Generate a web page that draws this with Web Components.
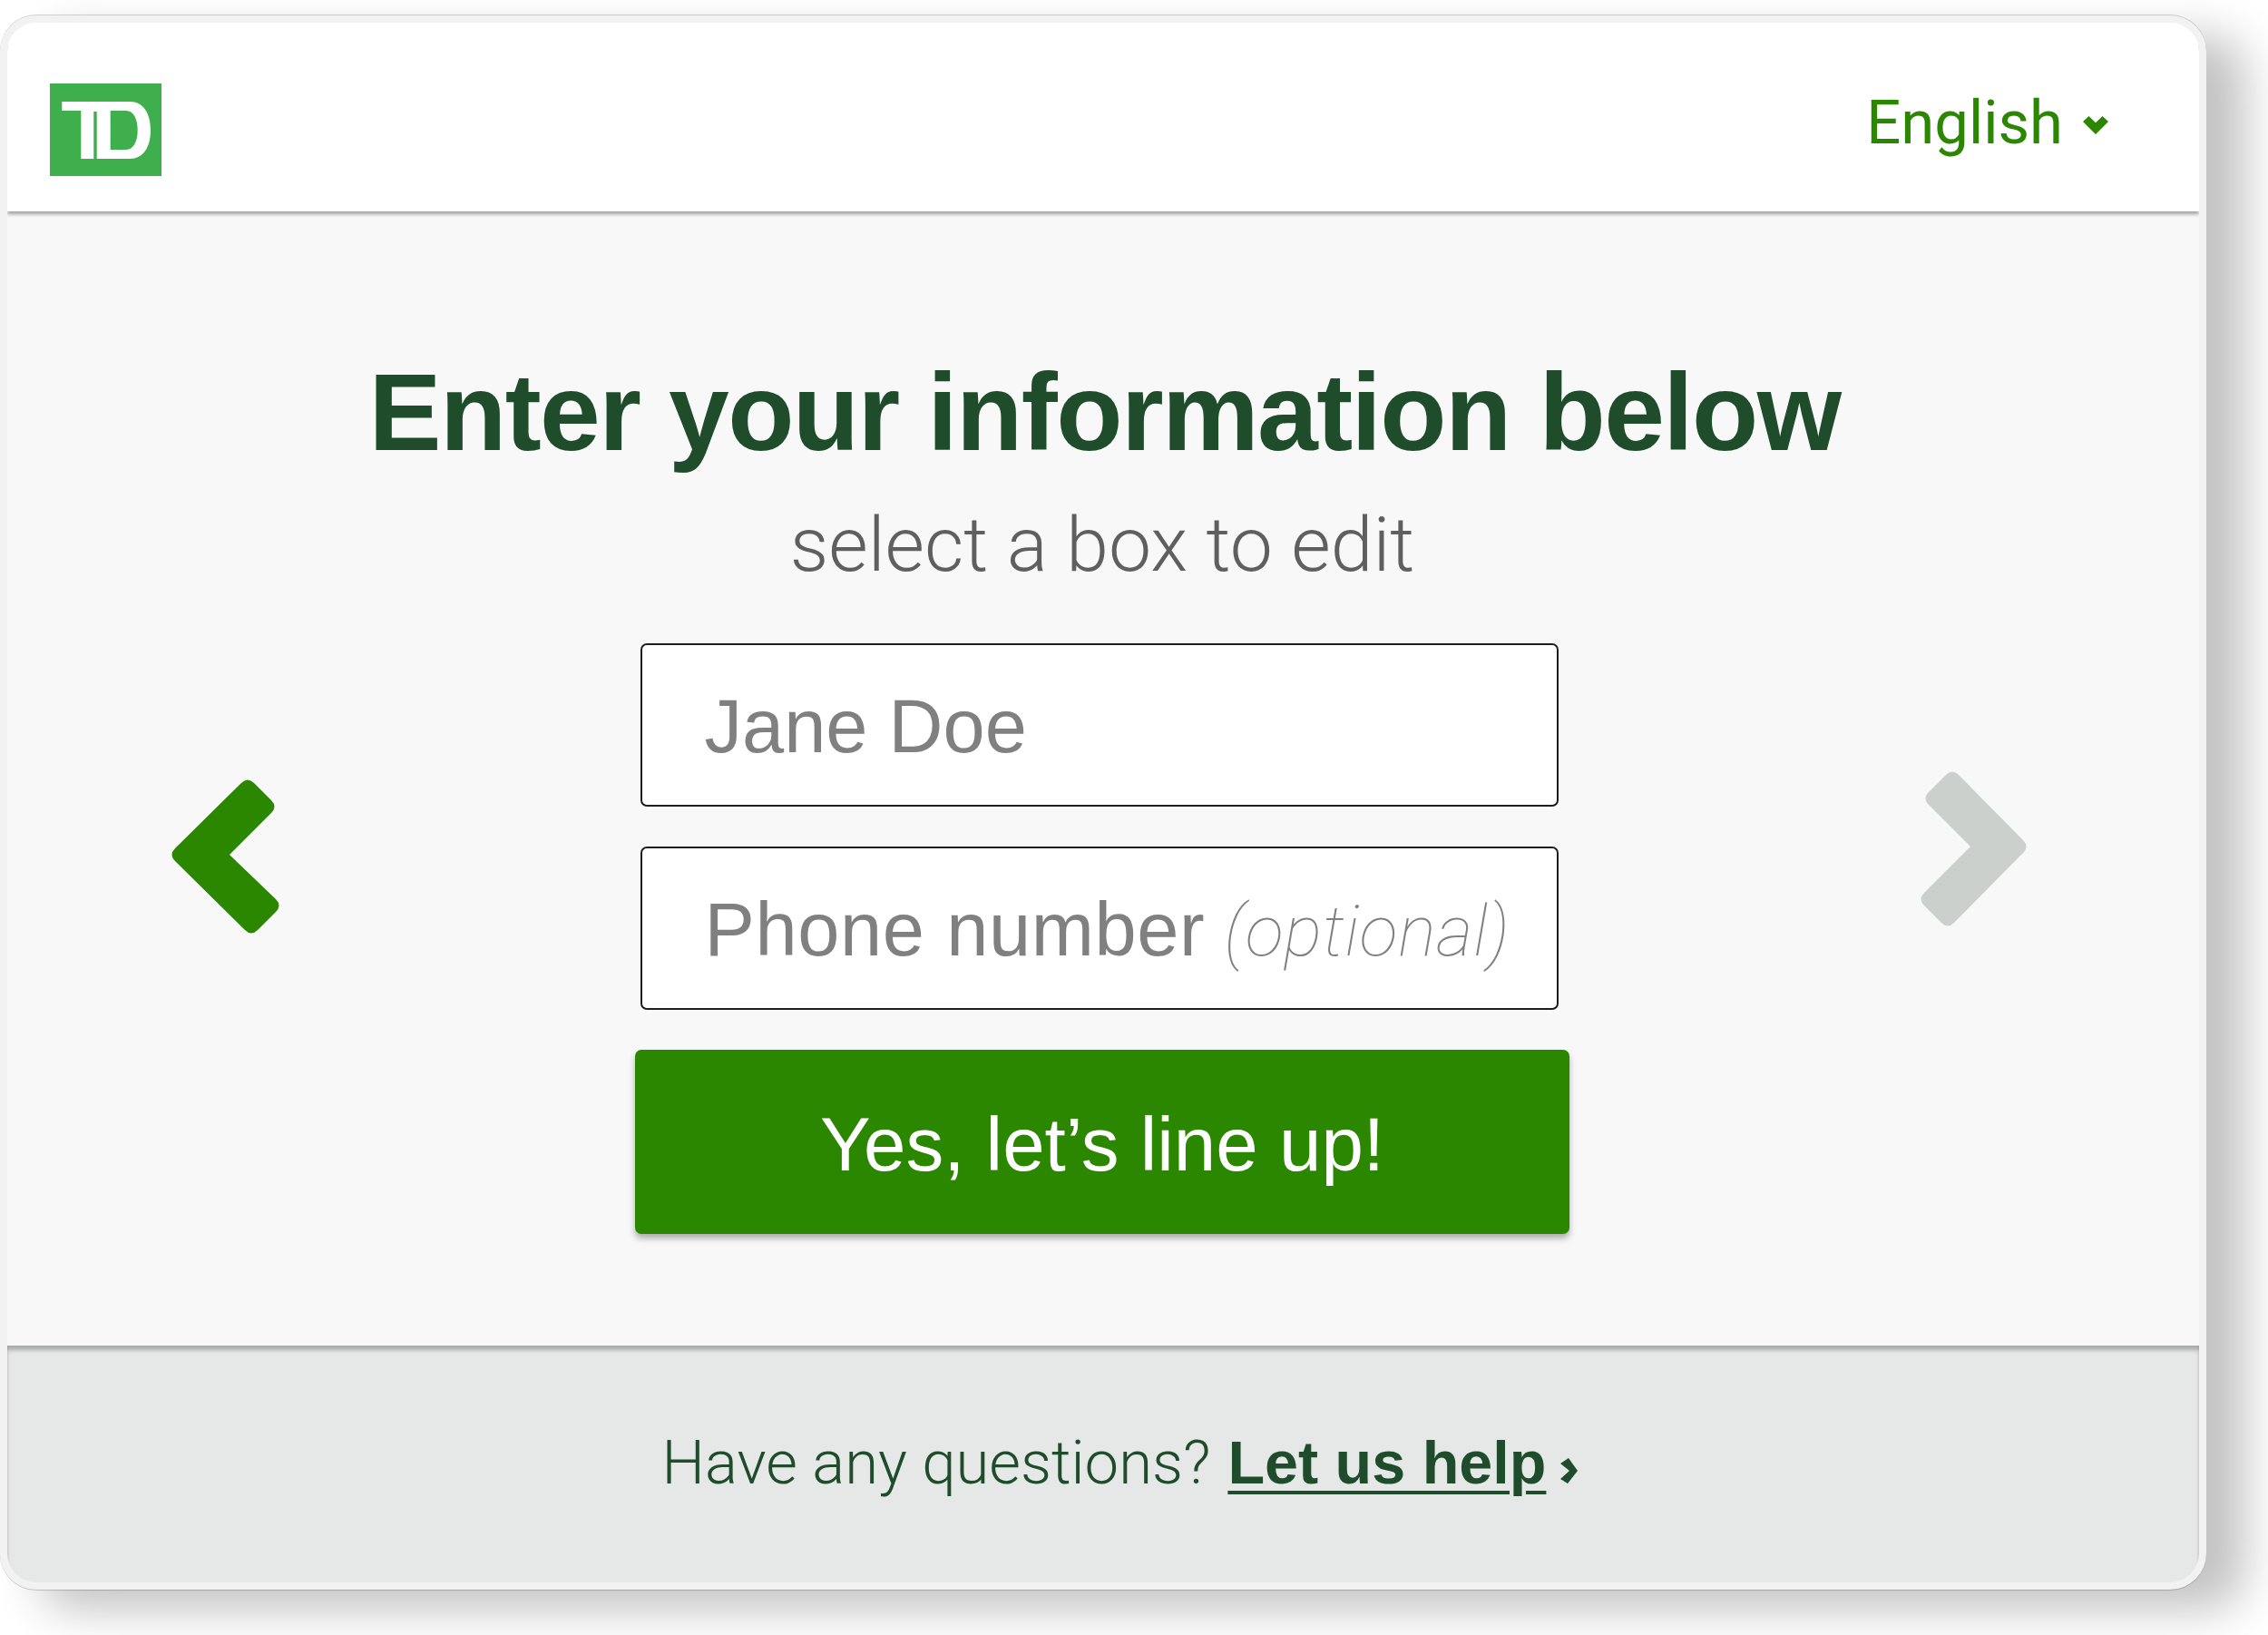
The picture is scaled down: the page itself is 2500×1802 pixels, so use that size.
<!doctype html>
<html lang="en">
<head>
<meta charset="utf-8">
<title>Enter your information</title>
<style>
	html, body { margin: 0; background: #fff; height: 100%; overflow: hidden; }
	body { font-family: "Liberation Sans", Arial, sans-serif; }
</style>
</head>
<body>
<td-card>
	<td-header slot="header" label="English"></td-header>
	<td-main slot="main">
		<span slot="title">Enter your information below</span>
		<span slot="subtitle">select a box to edit</span>
		<td-arrow slot="left" dir="left"></td-arrow>
		<td-field slot="form">Jane Doe</td-field>
		<td-field slot="form" style="letter-spacing:.6px">Phone number <span style="font-family:Roboto,sans-serif;font-weight:100;font-style:italic;font-size:78px;letter-spacing:.8px;margin-left:-2px">(optional)</span></td-field>
		<td-button slot="form">Yes, let’s line up!</td-button>
		<td-arrow slot="right" dir="right"></td-arrow>
	</td-main>
	<td-footer slot="footer"></td-footer>
</td-card>

<script>
class TdCard extends HTMLElement {
	constructor() {
		super();
		this.shadowDOM = this.attachShadow({ mode: "open" });
	}
	connectedCallback() {
		this.shadowDOM.innerHTML = `
		<style>
		:host {
			display: flex;
			flex-direction: column;
			box-sizing: border-box;
			width: 2432px;
			height: 1735px;
			margin-top: 17px;
			border: 8px solid #f2f2f2;
			border-radius: 40px;
			background: #f8f8f8;
			overflow: hidden;
			box-shadow: 43px 22px 50px rgba(0, 0, 0, 0.24), 0 -1px 0 #d4d4d4, 0 1px 0 #cfcfcf;
		}
		</style>
		<slot name="header"></slot>
		<slot name="main"></slot>
		<slot name="footer"></slot>
		`;
	}
}

class TdHeader extends HTMLElement {
	constructor() {
		super();
		this.shadowDOM = this.attachShadow({ mode: "open" });
	}
	connectedCallback() {
		this.shadowDOM.innerHTML = `
		<style>
		:host {
			display: flex;
			justify-content: space-between;
			align-items: flex-start;
			box-sizing: border-box;
			height: 208px;
			padding: 67px 100px 0 47px;
			background: #fff;
			box-shadow: 0 3px 4px rgba(0, 0, 0, 0.36);
			position: relative;
		}
		.lang {
			display: flex;
			align-items: center;
			gap: 22px;
			font: 400 67px/86px Roboto, sans-serif;
			color: #2b8600;
		}
		.lang svg { margin-top: 6px; }
		svg { display: block; }
		</style>
		<svg width="123" height="102" viewBox="0 0 123 102">
			<rect width="123" height="102" fill="#3fae4c"/>
			<path fill="#fff" fill-rule="evenodd" d="M13.3 20H88C103 20 111 33 111 51.500C111 70 103 83 88 83H34.300V30H13.300Z
				M48.300 31V83H51.700V31Z
				M66.700 30V73H84C92 73 96.700 64 96.700 51.500C96.700 39 92 30 84 30Z"/>
		</svg>
		<div class="lang">
			<span>${this.getAttribute("label")}</span>
			<svg width="28" height="20" viewBox="0 0 28 20"><path fill="#2b8600" d="M0 6 6.500 0 14 7.300 21.500 0 28 6 14 20Z"/></svg>
		</div>
		`;
	}
}

class TdMain extends HTMLElement {
	constructor() {
		super();
		this.shadowDOM = this.attachShadow({ mode: "open" });
	}
	connectedCallback() {
		this.shadowDOM.innerHTML = `
		<style>
		:host {
			display: flex;
			flex-direction: column;
			align-items: center;
			box-sizing: border-box;
			height: 1250px;
			padding-top: 161px;
		}
		.title {
			font: 700 120px/120px "Liberation Sans", Arial, sans-serif;
			letter-spacing: -1.6px;
			color: #1f4d2b;
			margin-left: 3px;
		}
		.subtitle {
			font: 300 84px/100px Roboto, sans-serif;
			color: #5f5f5f;
			margin-top: 37px;
			margin-left: -2px;
		}
		.stage {
			display: grid;
			grid-template-columns: 1fr 1030px 1fr;
			box-sizing: border-box;
			width: 100%;
			padding-right: 2px;
			margin-top: 58px;
		}
		.form {
			display: flex;
			flex-direction: column;
			align-items: center;
			gap: 44px;
		}
		.left { justify-self: start; margin: 148px 0 0 178px; }
		.right { justify-self: end; margin: 140px 185px 0 0; }
		</style>
		<div class="title"><slot name="title"></slot></div>
		<div class="subtitle"><slot name="subtitle"></slot></div>
		<div class="stage">
			<div class="left"><slot name="left"></slot></div>
			<div class="form"><slot name="form"></slot></div>
			<div class="right"><slot name="right"></slot></div>
		</div>
		`;
	}
}

class TdArrow extends HTMLElement {
	constructor() {
		super();
		this.shadowDOM = this.attachShadow({ mode: "open" });
	}
	connectedCallback() {
		const left = this.getAttribute("dir") === "left";
		this.shadowDOM.innerHTML = `
		<style>
		:host { display: block; }
		svg { display: block; }
		</style>
		${left
			? `<svg width="122" height="175" viewBox="34 36 122 175"><path fill="#2b8600" d="M114 42Q121 35 128 42L147 61Q154 68 147 75L101 121 152 170Q159 177 152 184L132 204Q125 211 118 204L41 128Q34 121 41 114Z"/></svg>`
			: `<svg width="122" height="175" viewBox="25 29 122 175"><path fill="#cbd0cc" d="M69 34 140 106Q147 113 140 120L64 197Q57 204 50 197L31 178Q24 171 31 164L82 113 36 67Q29 60 36 53L55 34Q62 27 69 34Z"/></svg>`}
		`;
	}
}

class TdField extends HTMLElement {
	constructor() {
		super();
		this.shadowDOM = this.attachShadow({ mode: "open" });
	}
	connectedCallback() {
		this.shadowDOM.innerHTML = `
		<style>
		:host {
			display: flex;
			align-items: center;
			box-sizing: border-box;
			width: 1012px;
			height: 180px;
			margin-right: 7px;
			padding: 3px 0 0 69px;
			border: 2px solid #1d1d1d;
			border-radius: 7px;
			background: #fff;
			font-size: 83px;
			color: #808080;
		}
		.value { white-space: nowrap; }
		</style>
		<div class="value"><slot></slot></div>
		`;
	}
}

class TdButton extends HTMLElement {
	constructor() {
		super();
		this.shadowDOM = this.attachShadow({ mode: "open" });
	}
	connectedCallback() {
		this.shadowDOM.innerHTML = `
		<style>
		:host {
			display: flex;
			justify-content: center;
			align-items: center;
			box-sizing: border-box;
			width: 1030px;
			height: 203px;
			padding-top: 5px;
			border-radius: 7px;
			background: #2b8600;
			color: #fff;
			font-size: 83.500px;
			box-shadow: 0 5px 7px rgba(0, 0, 0, 0.3);
		}
		</style>
		<slot></slot>
		`;
	}
}

class TdFooter extends HTMLElement {
	constructor() {
		super();
		this.shadowDOM = this.attachShadow({ mode: "open" });
	}
	connectedCallback() {
		this.shadowDOM.innerHTML = `
		<style>
		:host {
			display: flex;
			justify-content: center;
			align-items: center;
			box-sizing: border-box;
			flex: 1;
			padding: 0 0 3px 37px;
			background: #e6e8e7;
			color: #1f4d2b;
			box-shadow: inset 0 6px 4px -1px rgba(0, 0, 0, 0.26), inset 3px 0 3px -2px rgba(0, 0, 0, 0.07), inset -3px 0 3px -2px rgba(0, 0, 0, 0.07);
		}
		.light { font: 300 67px/80px Roboto, sans-serif; }
		a {
			font: 700 66.500px/80px "Liberation Sans", Arial, sans-serif;
			color: inherit;
			text-decoration: underline;
			text-decoration-thickness: 4px;
			text-underline-offset: 8px;
			margin-left: 19px;
		}
		svg { margin-left: 16px; margin-top: 17px; }
		</style>
		<span class="light">Have any questions?</span>
		<a href="#">Let us help</a>
		<svg width="19" height="28" viewBox="0 0 19 28"><path fill="#1f4d2b" d="M9 0 19 14 8 28 0 23 10 14 0 6Z"/></svg>
		`;
	}
}

customElements.define("td-card", TdCard);
customElements.define("td-header", TdHeader);
customElements.define("td-main", TdMain);
customElements.define("td-arrow", TdArrow);
customElements.define("td-field", TdField);
customElements.define("td-button", TdButton);
customElements.define("td-footer", TdFooter);
</script>
</body>
</html>
